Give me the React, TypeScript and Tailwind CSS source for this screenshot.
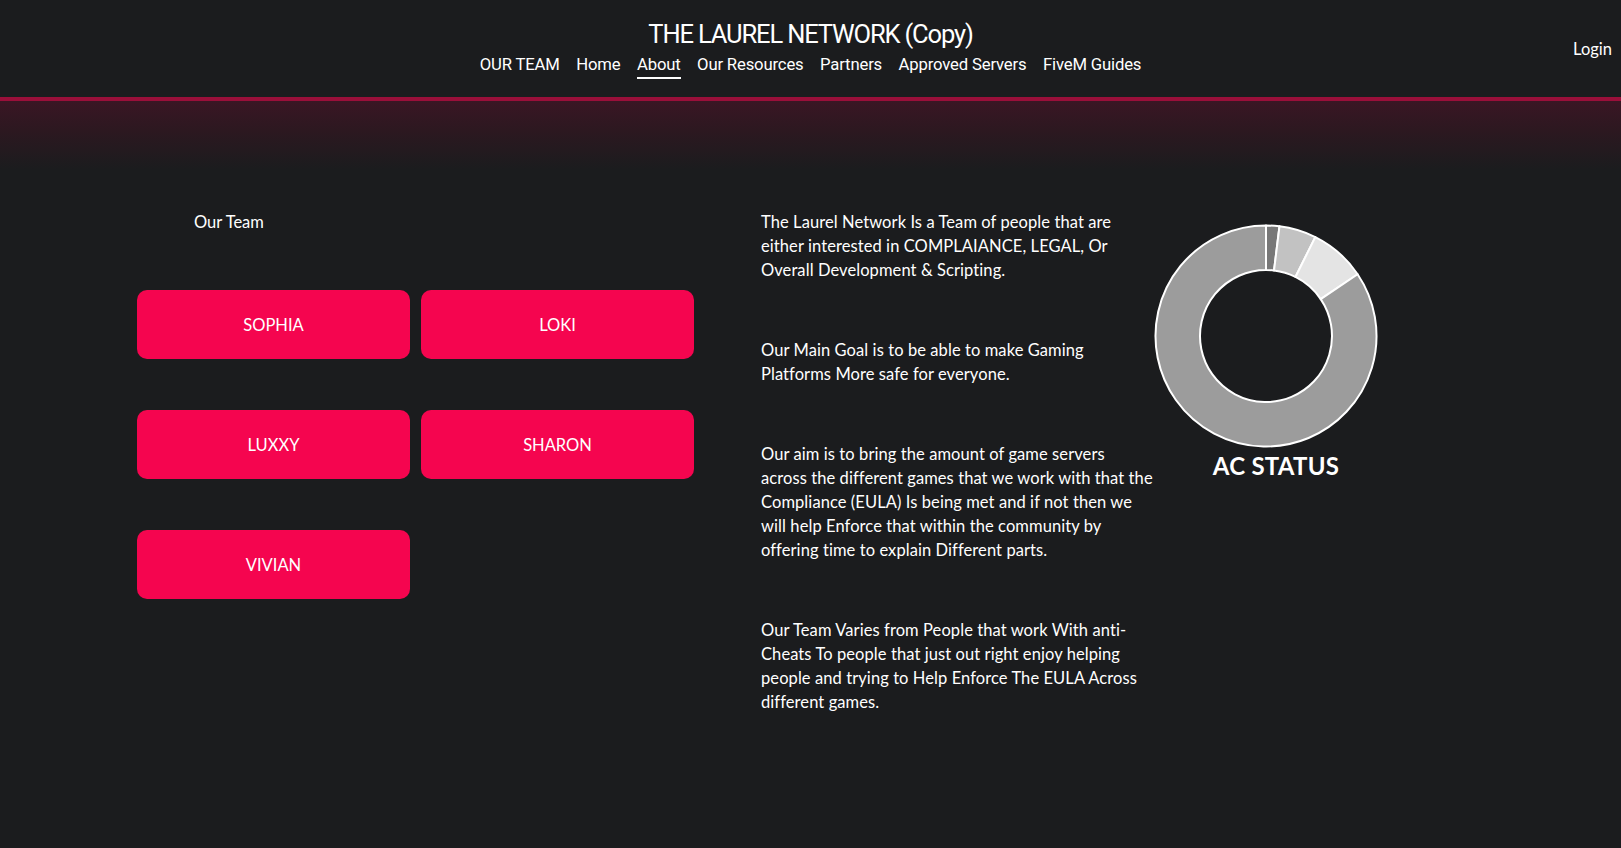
import React from 'react'

const navItems = ['OUR TEAM', 'Home', 'About', 'Our Resources', 'Partners', 'Approved Servers', 'FiveM Guides']

const team = ['SOPHIA', 'LOKI', 'LUXXY', 'SHARON', 'VIVIAN']

const paragraphs = [
  'The Laurel Network Is a Team of people that are either interested in COMPLAIANCE, LEGAL, Or Overall Development & Scripting.',
  'Our Main Goal is to be able to make Gaming Platforms More safe for everyone.',
  'Our aim is to bring the amount of game servers across the different games that we work with that the Compliance (EULA) Is being met and if not then we will help Enforce that within the community by offering time to explain Different parts.',
  'Our Team Varies from People that work With anti-Cheats To people that just out right enjoy helping people and trying to Help Enforce The EULA Across different games.',
]

// slices of the donut, in degrees clockwise from 12 o'clock
const slices = [
  { from: 0, to: 7, color: '#787878' },
  { from: 7, to: 26.5, color: '#c2c2c2' },
  { from: 26.5, to: 56, color: '#e4e4e4' },
  { from: 56, to: 360, color: '#9c9c9c' },
]

function pt(cx: number, cy: number, r: number, deg: number) {
  const a = ((deg - 90) * Math.PI) / 180
  return [cx + r * Math.cos(a), cy + r * Math.sin(a)]
}

function arc(from: number, to: number) {
  const c = 112
  const R = 110.5
  const r = 66
  const large = to - from > 180 ? 1 : 0
  const [x1, y1] = pt(c, c, R, from)
  const [x2, y2] = pt(c, c, R, to - 0.001)
  const [x3, y3] = pt(c, c, r, to - 0.001)
  const [x4, y4] = pt(c, c, r, from)
  return `M${x1} ${y1} A${R} ${R} 0 ${large} 1 ${x2} ${y2} L${x3} ${y3} A${r} ${r} 0 ${large} 0 ${x4} ${y4} Z`
}

function Donut() {
  return (
    <svg width="224" height="224" viewBox="0 0 224 224">
      {slices.map((s) => (
        <path key={s.from} d={arc(s.from, s.to)} fill={s.color} stroke="#ffffff" strokeWidth="2" strokeLinejoin="round" />
      ))}
    </svg>
  )
}

export default function App() {
  return (
    <div className="min-h-[848px] bg-[#1b1c1e] text-white font-['Lato','Noto_Sans',sans-serif]">
      {/* header */}
      <header className="grid grid-cols-[1fr_auto_1fr] h-[97px]">
        <div />
        <div className="flex flex-col items-center pt-[18px]">
          <h1 className="font-['Roboto',sans-serif] text-[25.5px] leading-[32px] tracking-[-0.045em] text-white">
            THE LAUREL NETWORK (Copy)
          </h1>
          <nav className="mt-[4px] flex gap-[16.5px] font-['Roboto',sans-serif] text-[16.7px] tracking-[-0.01em]">
            {navItems.map((item) => (
              <a
                key={item}
                className={
                  item === 'About'
                    ? 'leading-[22px] pb-[1px] border-b-2 border-white'
                    : 'leading-[22px] pb-[1px] border-b-2 border-transparent'
                }
              >
                {item}
              </a>
            ))}
          </nav>
        </div>
        <div className="flex justify-end items-start pt-[38px] pr-[9px]">
          <a className="text-[16.5px] leading-[22px]">Login</a>
        </div>
      </header>
      <div className="h-[4px] bg-[#9a0f3a]" />

      {/* content */}
      <main className="bg-[linear-gradient(180deg,#3a1624_0px,#2c1820_30px,#1b1c1e_68px)] pt-[109px] pl-[137px] pb-[140px] flex">
        <section className="w-[557px]">
          <p className="pl-[57px] text-[16.5px] leading-[24px]">Our Team</p>
          <div className="mt-[56px] grid grid-cols-2 gap-x-[11px] gap-y-[51px]">
            {team.map((name) => (
              <button
                key={name}
                className="h-[69px] pt-[2px] rounded-[10px] bg-[#f5054f] text-[16.5px] text-white"
              >
                {name}
              </button>
            ))}
          </div>
        </section>

        <section className="ml-[67px] w-[392px] flex flex-col gap-[56px]">
          {paragraphs.map((p) => (
            <p key={p.slice(0, 12)} className="text-[16.5px] leading-[24px] tracking-[0.005em]">
              {p}
            </p>
          ))}
        </section>

        <section className="ml-[1px] mt-[14px] flex flex-col items-center w-[224px]">
          <Donut />
          <h2 className="mt-[3px] pl-[20px] text-[24px] leading-[30px] font-bold tracking-[0.01em]">AC STATUS</h2>
        </section>
      </main>
    </div>
  )
}
